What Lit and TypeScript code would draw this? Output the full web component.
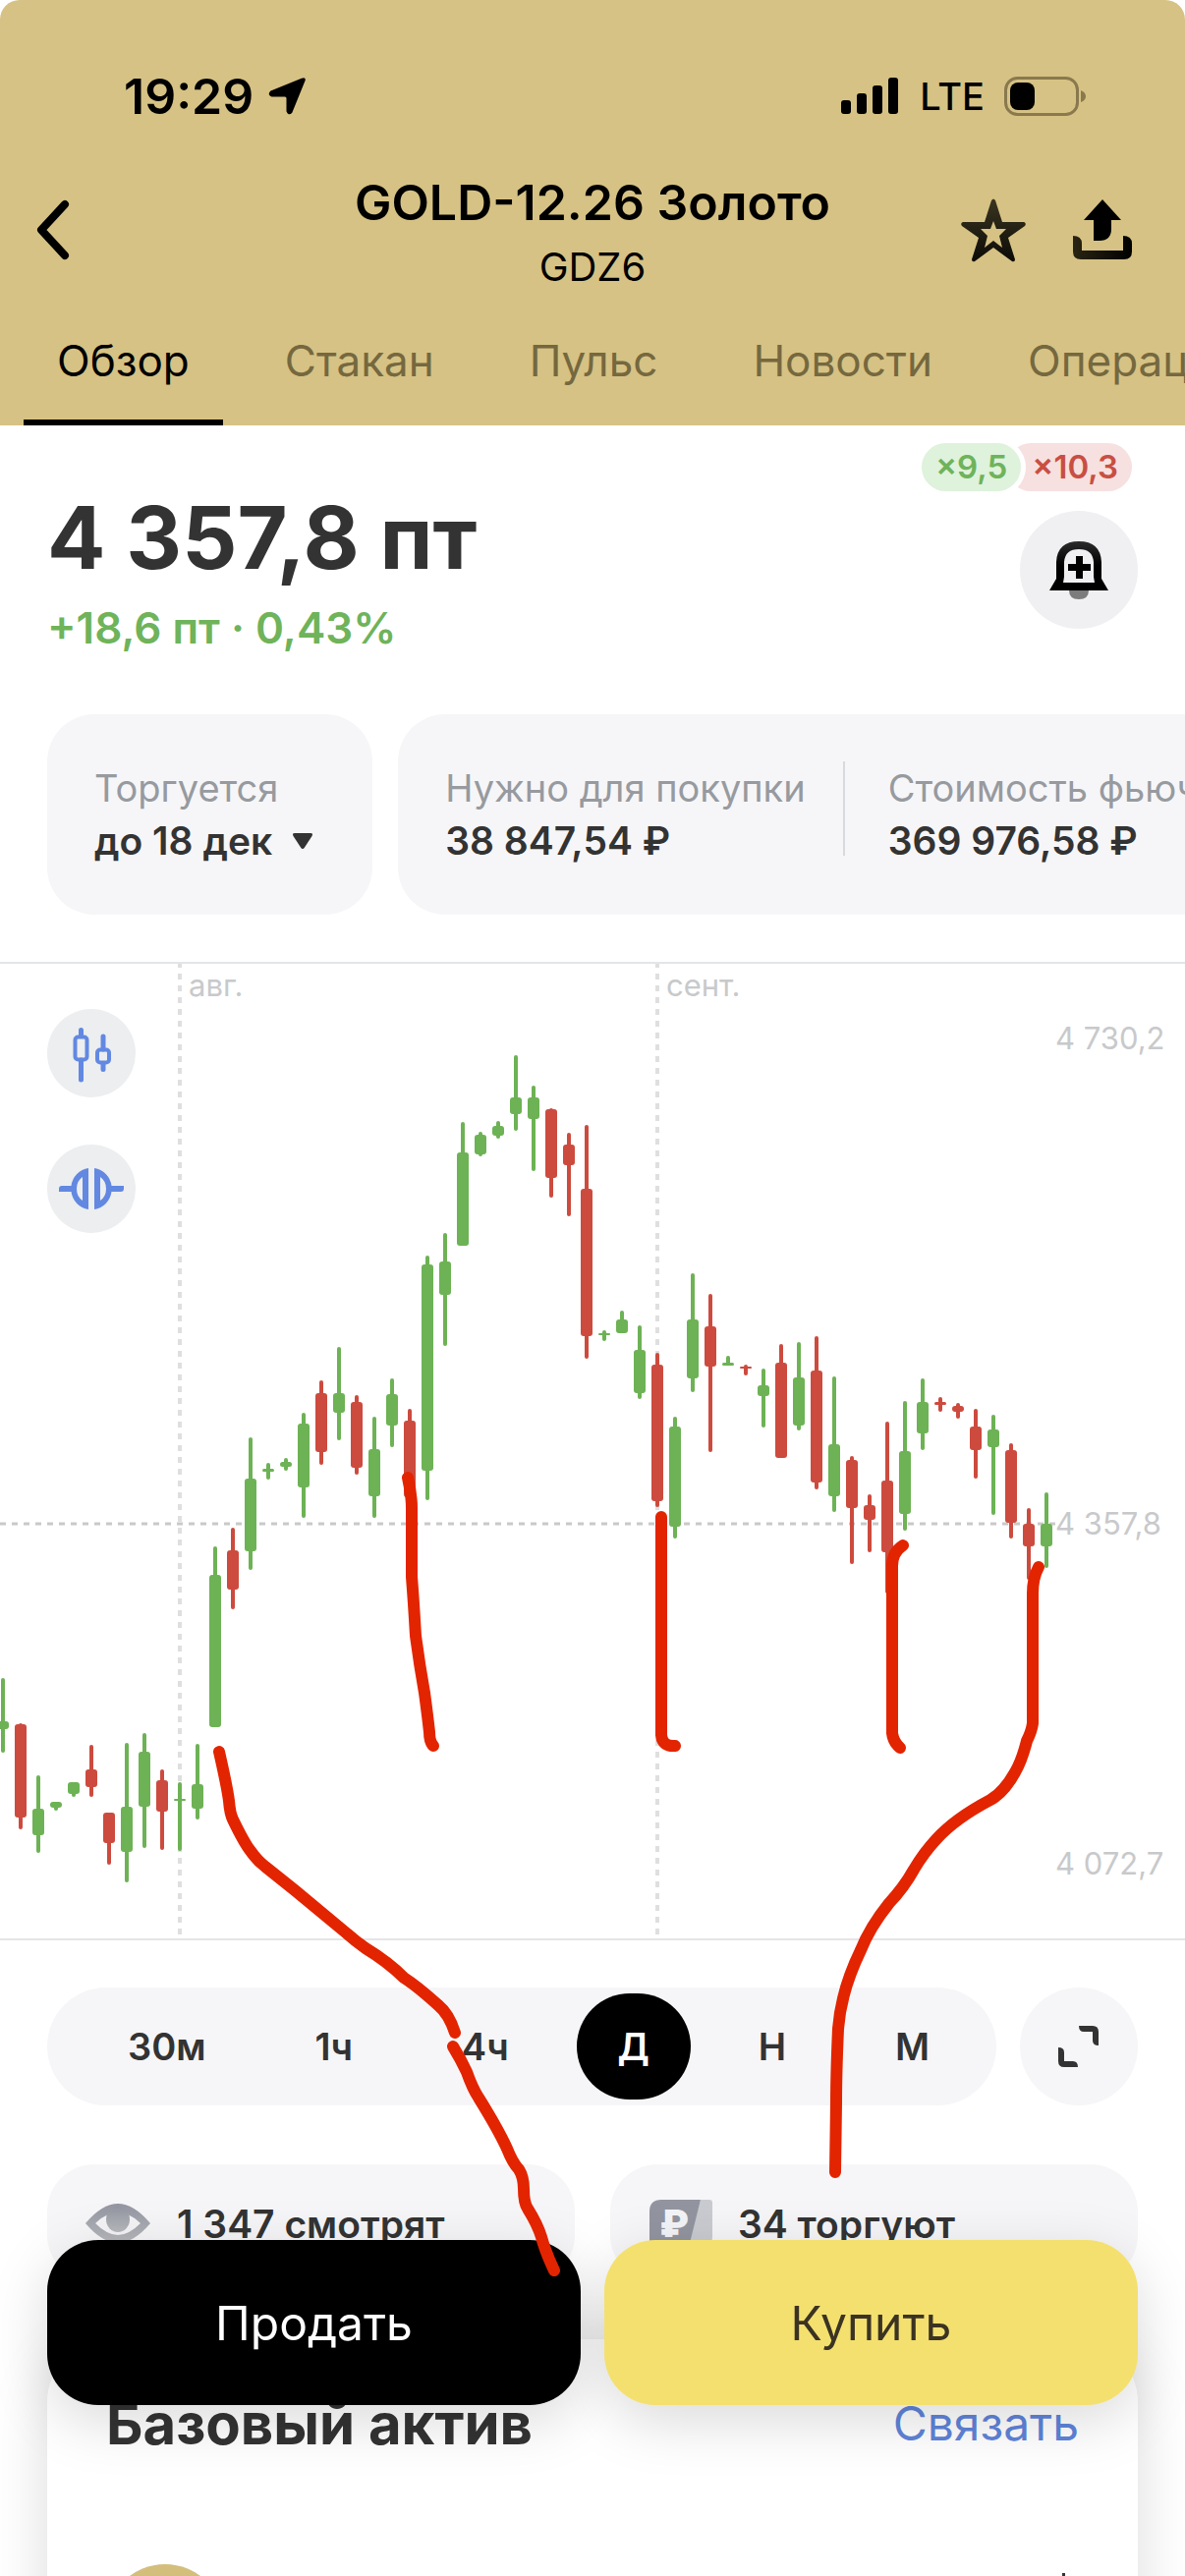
import { LitElement, html, svg, css } from "lit";
import { customElement, property, state } from "lit/decorators.js";
import { classMap } from "lit/directives/class-map.js";

type Candle = [up: 0 | 1, high: number, low: number, top: number, bottom: number];

const FIRST_X = 3;
const STEP = 18;

// One entry per trading day: direction, wick extent, body extent.
const CANDLES: Candle[] = [
  [1, 1708, 1784, 1752, 1760],
  [0, 1754, 1862, 1755, 1850],
  [1, 1807, 1886, 1841, 1868],
  [1, 1834, 1843, 1834, 1840],
  [1, 1814, 1829, 1814, 1826],
  [0, 1776, 1829, 1801, 1819],
  [0, 1845, 1898, 1845, 1876],
  [1, 1774, 1916, 1839, 1885],
  [1, 1764, 1881, 1783, 1839],
  [0, 1801, 1883, 1812, 1844],
  [1, 1814, 1884, 1831, 1833],
  [1, 1775, 1852, 1816, 1841],
  [1, 1574, 1758, 1603, 1758],
  [0, 1555, 1638, 1578, 1618],
  [1, 1463, 1598, 1505, 1579],
  [1, 1489, 1506, 1495, 1498],
  [1, 1484, 1497, 1488, 1493],
  [1, 1438, 1545, 1449, 1514],
  [0, 1405, 1491, 1418, 1478],
  [1, 1371, 1466, 1418, 1438],
  [0, 1420, 1501, 1427, 1494],
  [1, 1442, 1545, 1475, 1523],
  [1, 1403, 1473, 1419, 1451],
  [0, 1434, 1524, 1446, 1524],
  [1, 1278, 1527, 1287, 1497],
  [1, 1255, 1370, 1284, 1318],
  [1, 1142, 1268, 1173, 1268],
  [1, 1152, 1177, 1155, 1175],
  [1, 1141, 1159, 1146, 1156],
  [1, 1074, 1151, 1117, 1134],
  [1, 1105, 1192, 1117, 1139],
  [0, 1128, 1219, 1129, 1199],
  [0, 1153, 1238, 1165, 1186],
  [0, 1145, 1383, 1210, 1360],
  [1, 1354, 1365, 1357, 1359],
  [1, 1334, 1357, 1343, 1357],
  [1, 1349, 1424, 1374, 1418],
  [0, 1377, 1534, 1389, 1528],
  [1, 1442, 1566, 1452, 1554],
  [1, 1296, 1417, 1343, 1403],
  [0, 1317, 1478, 1350, 1391],
  [1, 1380, 1390, 1387, 1390],
  [0, 1389, 1400, 1391, 1393],
  [1, 1393, 1453, 1410, 1421],
  [0, 1368, 1484, 1387, 1484],
  [1, 1366, 1456, 1402, 1451],
  [0, 1360, 1516, 1395, 1509],
  [1, 1401, 1539, 1470, 1523],
  [0, 1482, 1592, 1486, 1535],
  [0, 1521, 1580, 1532, 1547],
  [0, 1447, 1622, 1507, 1580],
  [1, 1426, 1558, 1477, 1541],
  [1, 1403, 1476, 1427, 1459],
  [0, 1422, 1437, 1427, 1430],
  [0, 1428, 1444, 1431, 1437],
  [0, 1434, 1505, 1452, 1476],
  [1, 1440, 1542, 1455, 1473],
  [0, 1469, 1566, 1476, 1550],
  [0, 1535, 1608, 1551, 1574],
  [1, 1519, 1596, 1551, 1574],
];

const MARKS = [
  "M223 1783 Q231 1818 233 1833 Q234 1846 237 1852 Q248 1875 255 1884 Q262 1894 270 1900 L300 1924 L353 1968 Q362 1976 372 1983 Q395 1997 411 2013 Q425 2022 446 2041 Q457 2050 463 2069",
  "M461 2083 Q469 2096 475 2109 Q481 2126 487 2135 Q508 2169 516 2187 Q522 2202 528 2208 Q533 2216 533 2228 Q533 2242 537 2248 Q547 2264 551 2277 Q555 2292 564 2311",
  "M415 1504 Q419 1522 419 1535 L419 1605 Q421 1630 423 1665 Q427 1695 432 1723 Q435 1745 437 1763 Q437 1773 441 1777",
  "M673 1544 L673 1766 Q674 1778 687 1777",
  "M919 1573 Q908 1580 908 1594 L908 1764 Q909 1773 916 1779",
  "M1057 1595 Q1051 1606 1051 1622 L1051 1754 Q1050 1762 1045 1772 Q1040 1792 1033 1804 Q1022 1824 1008 1832 Q972 1851 953 1872 Q940 1886 930 1903 Q920 1921 905 1937 Q885 1962 876 1985 Q856 2026 853 2065 Q851 2110 851 2140 L850 2211",
];

@customElement("price-chart")
export class PriceChart extends LitElement {
  static styles = css`
    :host {
      display: block;
      position: relative;
      border-bottom: 2px solid #e4e5e6;
      border-top: 2px solid #e4e5e6;
    }
    .plot {
      display: block;
      width: 100%;
      height: auto;
    }
    .label {
      font-family: Inter, "Liberation Sans", sans-serif;
      font-size: 31px;
      fill: #c8c9cb;
    }
    .month {
      stroke: #dfdfe0;
      stroke-width: 4;
      stroke-dasharray: 6 6;
    }
    .last {
      stroke: #c9c9ca;
      stroke-width: 3;
      stroke-dasharray: 6 6;
    }
    .up {
      fill: #6db255;
    }
    .down {
      fill: #cc4b3e;
    }
    .tools {
      position: absolute;
      top: 46px;
      left: 48px;
      display: grid;
      gap: 48px;
    }
    .tool {
      width: 90px;
      height: 90px;
      padding: 0;
      border: 0;
      border-radius: 50%;
      background: #eceeef;
    }
    .tool svg {
      display: block;
    }
  `;

  render() {
    return html`
      <svg class="plot" viewBox="0 981 1206 992" role="img" aria-label="График цены">
        <line class="month" x1="183" y1="979" x2="183" y2="1972"></line>
        <line class="month" x1="669" y1="979" x2="669" y2="1972"></line>
        <line class="last" x1="0" y1="1551" x2="1074" y2="1551"></line>
        <text class="label" x="192" y="1014">авг.</text>
        <text class="label" x="678" y="1014">сент.</text>
        <text class="label" x="1074" y="1068">4 730,2</text>
        <text class="label" x="1074" y="1562">4 357,8</text>
        <text class="label" x="1074" y="1908">4 072,7</text>
        ${CANDLES.map(([up, high, low, top, bottom], i) => {
          const x = FIRST_X + i * STEP;
          const h = bottom - top;
          return svg`<g class=${up ? "up" : "down"}>
            <rect x=${x - 2} y=${high} width="4" height=${low - high} rx="2"></rect>
            <rect x=${x - 6} y=${top} width="12" height=${h} rx=${Math.min(3, h / 2)}></rect>
          </g>`;
        })}
      </svg>
      <div class="tools">
        <button class="tool" aria-label="Вид графика">
          <svg viewBox="0 0 90 90" fill="none" stroke="#6288e2" stroke-width="4" stroke-linecap="round">
            <rect x="28.500" y="28.500" width="12" height="23" rx="3"></rect>
            <path d="M34.500 21.500v6M34.500 52v20" stroke-width="5"></path>
            <rect x="51" y="41.500" width="12" height="13" rx="3"></rect>
            <path d="M57 28v13M57 55.500v6" stroke-width="5"></path>
          </svg>
        </button>
        <button class="tool" aria-label="Сравнить">
          <svg viewBox="0 0 90 90" fill="#6288e2" fill-rule="evenodd">
            <path d="M42 24v42a21 21 0 0 1-17.500-18H12v-3q0-3 3-3h9.500A21 21 0 0 1 42 24zM36 33q-6 4-6 12t6 12z"></path>
            <path d="M48 24v42a21 21 0 0 0 17.500-18H75q3 0 3-3v-3H65.500A21 21 0 0 0 48 24zM54 33q6 4 6 12t-6 12z"></path>
          </svg>
        </button>
      </div>
    `;
  }
}

@customElement("info-item")
export class InfoItem extends LitElement {
  @property() label = "";
  @property() value = "";
  @property({ type: Boolean }) expandable = false;

  static styles = css`
    :host {
      display: block;
      white-space: nowrap;
      line-height: 54px;
    }
    .label {
      font-size: 38px;
      color: #979a9f;
    }
    .value {
      display: flex;
      align-items: center;
      gap: 20px;
      font-size: 39px;
      color: #333;
      font-weight: 600;
    }
  `;

  render() {
    return html`
      <div class="label">${this.label}</div>
      <div class="value">
        ${this.value}
        ${this.expandable
          ? html`<svg width="22" height="18" viewBox="0 0 22 18" fill="#333">
              <path d="M3 1h16q3 0 1.500 3L13 15.500q-2 3-4 0L1.500 4Q0 1 3 1z"></path>
            </svg>`
          : null}
      </div>
    `;
  }
}

@customElement("app-root")
export class AppRoot extends LitElement {
  @state() private tab = "Обзор";
  @state() private range = "Д";

  static styles = css`
    :host {
      display: block;
      position: relative;
      height: 100vh;
      overflow: hidden;
      background: #fff;
      color: #333;
      font-family: Inter, "Liberation Sans", sans-serif;
    }
    button {
      font: inherit;
      color: inherit;
      border: 0;
      padding: 0;
      background: none;
      cursor: pointer;
    }
    svg {
      display: block;
      flex: none;
    }
    h1,
    h2,
    p {
      margin: 0;
    }
    .header {
      padding-top: 68px;
      background: #d6c284;
      color: #000;
      border-radius: 20px 20px 0 0;
    }
    .status {
      display: flex;
      align-items: center;
      justify-content: space-between;
      height: 60px;
      padding: 0 100px 0 126px;
    }
    .status-side {
      display: flex;
      align-items: center;
    }
    .time {
      font-size: 50px;
      font-weight: 600;
      margin-right: 14px;
    }
    .network {
      font-size: 38px;
      font-weight: 500;
      margin: 0 20px;
    }
    .bar {
      display: grid;
      grid-template-columns: 1fr auto 1fr;
      align-items: center;
      margin-top: 40px;
      padding: 0 54px 0 30px;
    }
    .heading {
      text-align: center;
      padding-left: 24px;
    }
    .title {
      font-size: 50px;
      line-height: 76px;
      font-weight: 600;
    }
    .ticker {
      font-size: 40px;
      line-height: 56px;
    }
    .actions {
      display: flex;
      justify-content: flex-end;
      gap: 45px;
    }
    .tabs {
      display: flex;
      gap: 29px;
      padding-left: 24px;
      overflow: hidden;
    }
    .tab {
      flex: none;
      height: 133px;
      padding: 0 34px;
      font-size: 44px;
      color: #75683f;
    }
    .tab.active {
      color: #000;
      box-shadow: inset 0 -6px #000;
    }
    .overview {
      display: flex;
      justify-content: space-between;
      padding: 18px 48px 60px;
    }
    .price {
      margin-top: 44px;
      font-size: 88px;
      line-height: 104px;
      font-weight: 700;
    }
    .change {
      margin-top: 12px;
      font-size: 44px;
      line-height: 56px;
      font-weight: 600;
      color: #6fb35a;
    }
    .side {
      display: flex;
      flex-direction: column;
      align-items: flex-end;
      gap: 20px;
    }
    .pills {
      display: flex;
      padding-right: 6px;
      font-size: 33px;
      line-height: 49px;
      font-weight: 600;
    }
    .pill {
      border-radius: 25px;
      padding: 0 14px;
    }
    .pill.long {
      position: relative;
      background: #def2dc;
      color: #6fb35a;
      box-shadow: 0 0 0 5px #fff;
    }
    .pill.short {
      margin-left: -14px;
      padding-left: 25px;
      background: #f7e0e0;
      color: #c84f42;
    }
    .bell {
      display: grid;
      place-items: center;
      width: 120px;
      height: 120px;
      border-radius: 50%;
      background: #f0f0f2;
    }
    .infos {
      display: flex;
      gap: 26px;
      padding-left: 48px;
      overflow: hidden;
    }
    .info-card {
      display: flex;
      flex: none;
      padding: 48px 60px 48px 48px;
      border-radius: 48px;
      background: #f6f6f8;
      text-align: left;
    }
    .separator {
      width: 2px;
      height: 96px;
      margin: 0 44px 0 38px;
      background: #d7d9dc;
    }
    .chart {
      margin-top: 48px;
    }
    .range-row {
      display: flex;
      gap: 24px;
      padding: 48px 48px 60px;
    }
    .ranges {
      display: flex;
      flex: 1;
      align-items: center;
      justify-content: space-between;
      padding: 0 26px 0 40px;
      border-radius: 60px;
      background: #f6f6f8;
    }
    .range {
      height: 108px;
      padding: 0 42px;
      border-radius: 54px;
      font-size: 38px;
      font-weight: 600;
    }
    .range.active {
      background: #000;
      color: #fff;
    }
    .expand {
      display: grid;
      place-items: center;
      width: 120px;
      height: 120px;
      border-radius: 50%;
      background: #f6f6f8;
    }
    .stats {
      display: grid;
      grid-template-columns: 1fr 1fr;
      gap: 36px;
      padding: 0 48px;
    }
    .stat {
      display: flex;
      align-items: center;
      gap: 26px;
      height: 120px;
      padding: 0 38px;
      border-radius: 48px;
      background: #f6f6f8;
      font-size: 39px;
      font-weight: 600;
    }
    .asset {
      margin: 58px 48px 0;
      padding: 56px 60px 240px 60px;
      border-radius: 64px;
      background: #fff;
      box-shadow: 0 10px 60px rgba(0, 0, 0, 0.14);
    }
    .asset-head {
      display: flex;
      align-items: center;
      justify-content: space-between;
      line-height: 60px;
    }
    .asset-title {
      font-size: 58px;
      font-weight: 700;
    }
    .link {
      font-size: 48px;
      color: #5f84d9;
      text-decoration: none;
    }
    .asset-row {
      display: flex;
      align-items: flex-start;
      justify-content: space-between;
      margin-top: 113px;
      padding: 0 12px 0 0;
    }
    .coin {
      width: 120px;
      height: 120px;
      border-radius: 50%;
      background: #d3be7c;
    }
    .trade {
      position: fixed;
      left: 0;
      right: 0;
      bottom: 174px;
      display: grid;
      grid-template-columns: 1fr 1fr;
      gap: 24px;
      padding: 0 48px;
    }
    .trade-button {
      height: 168px;
      border-radius: 52px;
      font-size: 48px;
      box-shadow: 0 16px 60px rgba(0, 0, 0, 0.15);
    }
    .sell {
      background: #000;
      color: #fff;
    }
    .buy {
      background: #f4e06f;
      color: #3b3322;
    }
    .marks {
      position: absolute;
      top: 0;
      left: 0;
      width: 100%;
      pointer-events: none;
    }
  `;

  private header() {
    const tabs = ["Обзор", "Стакан", "Пульс", "Новости", "Операции"];
    return html`
      <header class="header">
        <div class="status">
          <div class="status-side">
            <span class="time">19:29</span>
            <svg width="40" height="40" viewBox="0 0 40 40" stroke="#000" stroke-width="3" stroke-linejoin="round">
              <path d="M36 3q2-1 1 1L24 36q-2 2-3-1V22q0-3-3-3H5q-3-1-1-3z"></path>
            </svg>
          </div>
          <div class="status-side">
            <svg width="60" height="38" viewBox="0 0 60 38">
              <rect x="0" y="23" width="10" height="14" rx="3"></rect>
              <rect x="16" y="16" width="10" height="21" rx="3"></rect>
              <rect x="32" y="8" width="10" height="29" rx="3"></rect>
              <rect x="48" y="0" width="10" height="37" rx="3"></rect>
            </svg>
            <span class="network">LTE</span>
            <svg width="84" height="40" viewBox="0 0 84 40">
              <rect x="1.500" y="1.500" width="73" height="37" rx="12" fill="none" stroke="#89794d" stroke-width="3"></rect>
              <path d="M78 14q5 2 5 6t-5 6z" fill="#89794d"></path>
              <rect x="6" y="6" width="25" height="28" rx="8"></rect>
            </svg>
          </div>
        </div>
        <div class="bar">
          <button class="back" aria-label="Назад">
            <svg width="44" height="64" viewBox="0 0 44 64" fill="none" stroke="#000" stroke-width="8" stroke-linecap="round" stroke-linejoin="round">
              <path d="M36 6L12 32l24 26"></path>
            </svg>
          </button>
          <div class="heading">
            <h1 class="title">GOLD-12.26 Золото</h1>
            <p class="ticker">GDZ6</p>
          </div>
          <div class="actions">
            <button aria-label="В избранное">
              <svg width="72" height="66" viewBox="0 0 72 66">
                <defs>
                  <linearGradient id="star" x1="0" y1="0" x2="0" y2="1">
                    <stop offset="0" stop-color="#3a3420"></stop>
                    <stop offset="1" stop-color="#0c0b07"></stop>
                  </linearGradient>
                </defs>
                <path fill="url(#star)" fill-rule="evenodd" d="M34 3q2-3 4 0l7 22h22q3 1 1 4L51 41l7 22q0 3-3 2L36 51 17 65q-3 1-3-2l7-22L4 29q-2-3 1-4h22zM36 24l-3 8h-10l7 7-3 12 9-7 9 7-3-12 7-7H39z"></path>
              </svg>
            </button>
            <button aria-label="Поделиться">
              <svg width="60" height="62" viewBox="0 0 60 62">
                <defs>
                  <linearGradient id="tray">
                    <stop offset="0" stop-color="#292412"></stop>
                    <stop offset="0.500" stop-color="#15130a"></stop>
                    <stop offset="1" stop-color="#000"></stop>
                  </linearGradient>
                </defs>
                <path d="M30 0l19 21H39v9q0 12-12 12h-6V21H11z"></path>
                <path fill="url(#tray)" d="M0 37q9 0 9 8v7h42V37q9 0 9 8v8q0 8-8 8H8q-8 0-8-8z"></path>
              </svg>
            </button>
          </div>
        </div>
        <nav class="tabs">
          ${tabs.map(
            (t) => html`<button class=${classMap({ tab: true, active: t === this.tab })} @click=${() => (this.tab = t)}>${t}</button>`
          )}
        </nav>
      </header>
    `;
  }

  private overview() {
    return html`
      <section class="overview">
        <div>
          <p class="price">4 357,8 пт</p>
          <p class="change">+18,6 пт · 0,43%</p>
        </div>
        <div class="side">
          <div class="pills">
            <span class="pill long">×9,5</span>
            <span class="pill short">×10,3</span>
          </div>
          <button class="bell" aria-label="Добавить уведомление">
            <svg width="60" height="60" viewBox="0 0 60 60">
              <defs>
                <linearGradient id="bell" x1="0" y1="0" x2="0" y2="1">
                  <stop offset="0" stop-color="#2c2c2c"></stop>
                  <stop offset="0.500" stop-color="#000"></stop>
                </linearGradient>
              </defs>
              <path d="M20 51h20q0 9-10 9t-10-9z" fill="#7c7c7c"></path>
              <path fill="url(#bell)" fill-rule="evenodd" d="M0 51l7-12V22Q8 1 30 1t23 21v17l7 12zM14 43h32l-1-6V22Q44 9 30 9T15 22v15z"></path>
              <path d="M27 16h7v8h8v7h-8v8h-7v-8h-8v-7h8z"></path>
            </svg>
          </button>
        </div>
      </section>
      <section class="infos">
        <button class="info-card">
          <info-item label="Торгуется" value="до 18 дек" expandable></info-item>
        </button>
        <div class="info-card">
          <info-item label="Нужно для покупки" value="38 847,54 ₽"></info-item>
          <span class="separator"></span>
          <info-item label="Стоимость фьючерса" value="369 976,58 ₽"></info-item>
        </div>
      </section>
    `;
  }

  private ranges() {
    return html`
      <div class="range-row">
        <div class="ranges">
          ${["30м", "1ч", "4ч", "Д", "Н", "М"].map(
            (r) => html`<button class=${classMap({ range: true, active: r === this.range })} @click=${() => (this.range = r)}>${r}</button>`
          )}
        </div>
        <button class="expand" aria-label="На весь экран">
          <svg width="44" height="44" viewBox="0 0 44 44" fill="#333">
            <path d="M22 1h14q6 0 6 6v14q-6 0-6-5V7h-9q-5 0-5-6z"></path>
            <path d="M1 23q6 0 6 5v9h9q5 0 5 6H7q-6 0-6-6z"></path>
          </svg>
        </button>
      </div>
    `;
  }

  private stats() {
    return html`
      <section class="stats">
        <div class="stat">
          <svg width="68" height="42" viewBox="0 0 68 42">
            <defs>
              <linearGradient id="eye" x1="0" y1="0" x2="0" y2="1">
                <stop offset="0" stop-color="#9396a1"></stop>
                <stop offset="1" stop-color="#b7b9bd"></stop>
              </linearGradient>
            </defs>
            <path fill="url(#eye)" d="M1 21Q18 1 34 1t33 20Q50 41 34 41T1 21z"></path>
            <path fill="#f4f4f6" d="M11 21q6-6 13-9h20q7 3 13 9-12 12-23 12T11 21z"></path>
            <ellipse cx="34" cy="17" rx="12" ry="13" fill="url(#eye)"></ellipse>
          </svg>
          <span>1 347 смотрят</span>
        </div>
        <div class="stat">
          <svg width="66" height="48" viewBox="0 0 66 48">
            <path d="M54 0h9q3 0 3 3v34q0 11-11 11H40z" fill="#c9cbd1"></path>
            <path d="M14 0h40L42 48H4q-2 0-2-3V12Q2 0 14 0z" fill="#92959f"></path>
            <text x="27" y="38" text-anchor="middle" font-size="38" font-weight="900" fill="#f3f4f7">₽</text>
          </svg>
          <span>34 торгуют</span>
        </div>
      </section>
    `;
  }

  private asset() {
    return html`
      <section class="asset">
        <div class="asset-head">
          <h2 class="asset-title">Базовый актив</h2>
          <a class="link" href="#link">Связать</a>
        </div>
        <div class="asset-row">
          <span class="coin"></span>
          <svg width="8" height="24" viewBox="0 0 8 24"><path d="M3 9h3v15H3z" fill="#333"></path></svg>
        </div>
      </section>
    `;
  }

  render() {
    return html`
      ${this.header()}
      <main>
        ${this.overview()}
        <price-chart class="chart"></price-chart>
        ${this.ranges()} ${this.stats()} ${this.asset()}
      </main>
      <div class="trade">
        <button class="trade-button sell">Продать</button>
        <button class="trade-button buy">Купить</button>
      </div>
      <svg class="marks" viewBox="0 0 1206 2622" fill="none" stroke="#e32400" stroke-width="12" stroke-linecap="round" stroke-linejoin="round" aria-hidden="true">
        ${MARKS.map((d) => svg`<path d=${d}></path>`)}
      </svg>
    `;
  }
}
